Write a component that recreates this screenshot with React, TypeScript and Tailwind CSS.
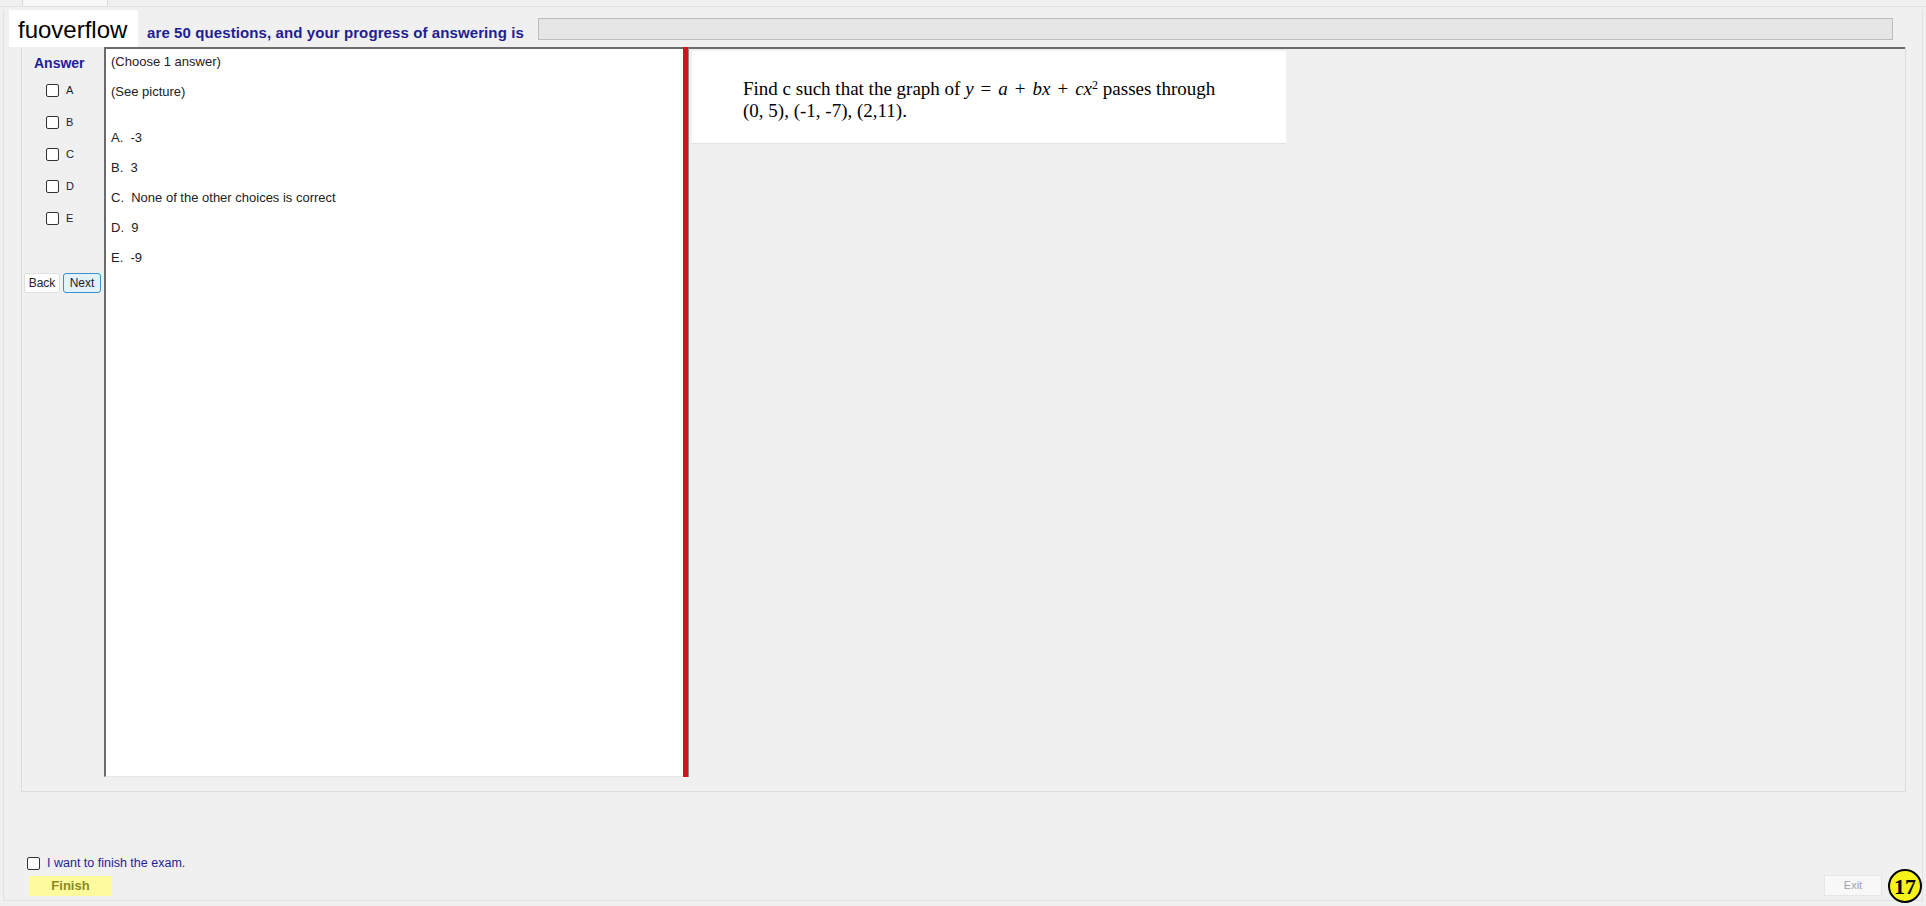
import React from "react";

const OPCIONES = ["A", "B", "C", "D", "E"];

const RESPUESTAS = [
  "A.  -3",
  "B.  3",
  "C.  None of the other choices is correct",
  "D.  9",
  "E.  -9",
];

function Casilla() {
  return (
    <span className="inline-block h-[13px] w-[13px] shrink-0 rounded-[2px] border border-[#333333] bg-white" />
  );
}

export default function App() {
  return (
    <div className="relative h-[906px] w-full overflow-hidden bg-[#f0f0f0] font-['Liberation_Sans',Arial,sans-serif] text-[#1a1a1a]">
      {/* pestaña superior */}
      <div className="h-[7px] border-b border-[#e2e2e2] pl-[22px]">
        <div className="h-[6px] w-[86px] border-x border-[#d9d9d9] bg-[#f8f8f8]" />
      </div>

      <div className="mx-[3px] h-[891px] border-x border-b border-[#e2e2e2]">
        {/* cabecera */}
        <div className="mt-[3px] flex h-[37px] items-center">
          <div className="ml-[5px] flex h-[37px] w-[129px] items-end bg-white pb-[3px] pl-[9px] text-[24px] leading-[28px] text-black">
            fuoverflow
          </div>
          <span className="ml-[9px] mt-[9px] text-[15px] font-bold tracking-[0.1px] text-[#1e1e92]">
            are 50 questions, and your progress of answering is
          </span>
          <div className="ml-[14px] mr-[29px] h-[22px] flex-1 border border-[#bdbdbd] bg-[#e6e6e6]" />
        </div>

        {/* caja de grupo */}
        <div className="ml-[17px] w-[1885px] border-x border-b border-[#dcdcdc] pb-[14px]">
          <div className="flex h-[730px]">
            {/* columna de respuesta */}
            <div className="flex w-[82px] flex-col">
              <div className="mt-[8px] pl-[12px] text-[14px] font-bold leading-[16px] text-[#1e1e92]">
                Answer
              </div>
              <div className="mt-[13px] flex flex-col gap-[19px] pl-[24px]">
                {OPCIONES.map((o) => (
                  <label key={o} className="flex items-center gap-[7px] text-[11px] leading-[13px] text-[#222]">
                    <Casilla />
                    {o}
                  </label>
                ))}
              </div>
              <div className="mt-[48px] flex gap-[3px] pl-[2px]">
                <button className="h-[20px] w-[36px] rounded-[2px] border border-[#e0e0e0] bg-white text-[12px] text-[#222]">
                  Back
                </button>
                <button className="h-[20px] w-[38px] rounded-[3px] border border-[#3c8fd0] bg-[#e3f1fb] text-[12px] text-[#222]">
                  Next
                </button>
              </div>
            </div>

            {/* panel de texto */}
            <div className="w-[579px] border-l-2 border-t-2 border-b border-[#6b6b6b] border-b-[#e6e6e6] bg-white pl-[5px] pt-[5px] text-[13px] leading-[16px] text-[#222]">
              <div>(Choose 1 answer)</div>
              <div className="mt-[14px]">(See picture)</div>
              <div className="mt-[30px] flex flex-col gap-[14px]">
                {RESPUESTAS.map((r) => (
                  <div key={r} className="whitespace-pre">
                    {r}
                  </div>
                ))}
              </div>
            </div>

            {/* separador rojo */}
            <div className="w-[5px] bg-[#d1141a]" />

            {/* panel de imagen */}
            <div className="flex-1 border-l border-t-2 border-[#6b6b6b] border-l-[#8a8a8a] pl-[3px] pt-[2px]">
              <div className="h-[93px] w-[594px] border-b border-[#e2e2e2] bg-white pl-[51px] pt-[27px] font-['Liberation_Serif','Times_New_Roman',serif] text-[19px] leading-[22px] text-black">
                <div className="whitespace-nowrap">
                  Find c such that the graph of <i>y</i>
                  <span className="mx-[7px]">=</span>
                  <i>a</i>
                  <span className="mx-[7px]">+</span>
                  <i>bx</i>
                  <span className="mx-[7px]">+</span>
                  <i>cx</i>
                  <sup className="text-[12px]">2</sup> passes through
                </div>
                <div>(0, 5), (-1, -7), (2,11).</div>
              </div>
            </div>
          </div>
        </div>

        {/* pie */}
        <div className="mt-[64px] flex items-center gap-[7px] pl-[23px] text-[12.5px] leading-[14px] text-[#1e1e92]">
          <Casilla />
          I want to finish the exam.
        </div>
        <div className="mt-[5px] flex items-end justify-between pl-[25px] pr-[40px]">
          <button className="h-[20px] w-[83px] bg-[#fdfb9e] text-[13px] font-bold text-[#8a8a1e]">
            Finish
          </button>
          <button className="h-[21px] w-[58px] border border-[#e6e6e6] bg-[#f8f8f8] text-[11px] text-[#a3a3a3]">
            Exit
          </button>
        </div>
      </div>

      {/* insignia */}
      <div className="absolute left-[1888px] top-[869px] flex h-[34px] w-[34px] items-center justify-center rounded-full border-2 border-black bg-[#f7f21a] font-['Liberation_Serif',serif] text-[22px] font-bold text-black">
        17
      </div>
    </div>
  );
}
